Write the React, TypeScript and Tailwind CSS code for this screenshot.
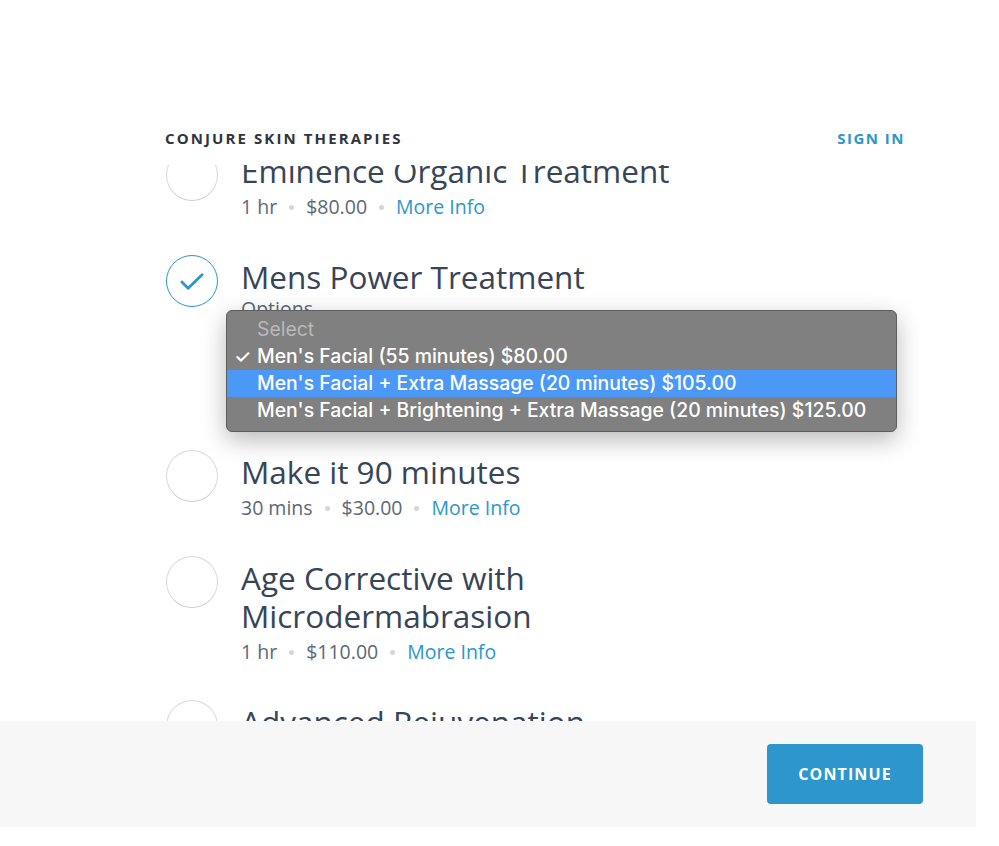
const font = { fontFamily: '"Open Sans", "DejaVu Sans", sans-serif' };

function Dot() {
  return <span className="mx-[12px] inline-block h-[5px] w-[5px] rounded-full bg-[#d3d7db] align-middle" />;
}

function Meta({ duration, price }: { duration: string; price: string }) {
  return (
    <div className="mt-[5px] flex items-center text-[19.5px] leading-[24px] text-[#5c6877]">
      <span>{duration}</span>
      <Dot />
      <span>{price}</span>
      <Dot />
      <span className="text-[#2c96cd]">More Info</span>
    </div>
  );
}

function Circle({ checked = false }: { checked?: boolean }) {
  if (checked) {
    return (
      <div className="flex h-[52px] w-[52px] shrink-0 items-center justify-center rounded-full border-[1.5px] border-[#2c96cd]">
        <svg width="52" height="52" viewBox="0 0 52 52" fill="none">
          <path d="M15.5 27 L22 33.5 L36.5 19.5" stroke="#2c96cd" strokeWidth="3" strokeLinecap="round" strokeLinejoin="round" />
        </svg>
      </div>
    );
  }
  return <div className="h-[52px] w-[52px] shrink-0 rounded-full border border-[#dadada] border-b-[#cfcfcf]" />;
}

interface Service {
  title: string;
  duration: string;
  price: string;
}

function ServiceRow({ title, duration, price }: Service) {
  return (
    <div className="flex gap-[23px]">
      <Circle />
      <div className="pb-[36px] pt-[3px]">
        <div className="text-[31.5px] leading-[38px] text-[#374557]">{title}</div>
        <Meta duration={duration} price={price} />
      </div>
    </div>
  );
}

const options = [
  "Men's Facial (55 minutes) $80.00",
  "Men's Facial + Extra Massage (20 minutes) $105.00",
  "Men's Facial + Brightening + Extra Massage (20 minutes) $125.00",
];

function Dropdown() {
  return (
    <div
      className="absolute left-[-15px] top-[55px] z-10 w-[671px] rounded-[6px] border border-[#5e5e5e] bg-[#808080] pb-[7px] pt-[5px] text-[19.4px] leading-[27px] shadow-[0_8px_24px_rgba(0,0,0,0.28)]"
      style={{ fontFamily: 'Inter, "Liberation Sans", sans-serif' }}
    >
      <div className="pl-[30px] text-[#b9b9b9]">Select</div>
      {options.map((o, i) => (
        <div
          key={o}
          className={`relative pl-[30px] font-medium text-white ${i === 1 ? "bg-[#4c98f7]" : ""}`}
        >
          {i === 0 && <span className="absolute left-[7px] top-0">✓</span>}
          {o}
        </div>
      ))}
    </div>
  );
}

function SelectedRow() {
  return (
    <div className="flex gap-[23px]">
      <Circle checked />
      <div className="relative w-[650px] pb-[49px] pt-[3px]">
        <div className="text-[31.5px] leading-[38px] text-[#374557]">Mens Power Treatment</div>
        <div className="mt-[1px] text-[19.5px] leading-[24px] text-[#5c6877]">Options</div>
        <div className="mt-[10px] flex h-[70px] items-center rounded-[4px] border border-[#d6d6d6] px-4 text-[18px] text-[#374557]">
          Men's Facial (55 minutes) $80.00
        </div>
        <Dropdown />
      </div>
    </div>
  );
}

export default function App() {
  return (
    <div className="h-[846px] w-[999px] bg-white" style={font}>
      <div className="flex h-[827px] w-[976px] flex-col">
        <header className="flex h-[165px] shrink-0 items-end justify-between pb-[17px] pl-[165px] pr-[71px]">
          <div className="text-[15px] font-bold leading-[20px] tracking-[0.14em] text-[#2e353d]">
            CONJURE SKIN THERAPIES
          </div>
          <div className="text-[15px] font-bold leading-[20px] tracking-[0.1em] text-[#2c96cd]">SIGN IN</div>
        </header>
        <main className="min-h-0 flex-1 overflow-hidden pl-[166px]">
          <div className="mt-[-16px]">
            <ServiceRow title="Eminence Organic Treatment" duration="1 hr" price="$80.00" />
            <SelectedRow />
            <ServiceRow title="Make it 90 minutes" duration="30 mins" price="$30.00" />
            <div className="flex gap-[23px]">
              <Circle />
              <div className="pb-[36px] pt-[3px]">
                <div className="text-[31.5px] leading-[38px] text-[#374557]">
                  Age Corrective with
                  <br />
                  Microdermabrasion
                </div>
                <Meta duration="1 hr" price="$110.00" />
              </div>
            </div>
            <ServiceRow title="Advanced Rejuvenation" duration="1 hr" price="$120.00" />
          </div>
        </main>
        <footer className="flex h-[106px] shrink-0 items-center justify-end bg-[#f7f7f7] pr-[53px]">
          <button className="h-[60px] w-[156px] rounded-[4px] bg-[#2c96cd] text-[16px] font-bold tracking-[0.07em] text-white">
            CONTINUE
          </button>
        </footer>
      </div>
    </div>
  );
}
